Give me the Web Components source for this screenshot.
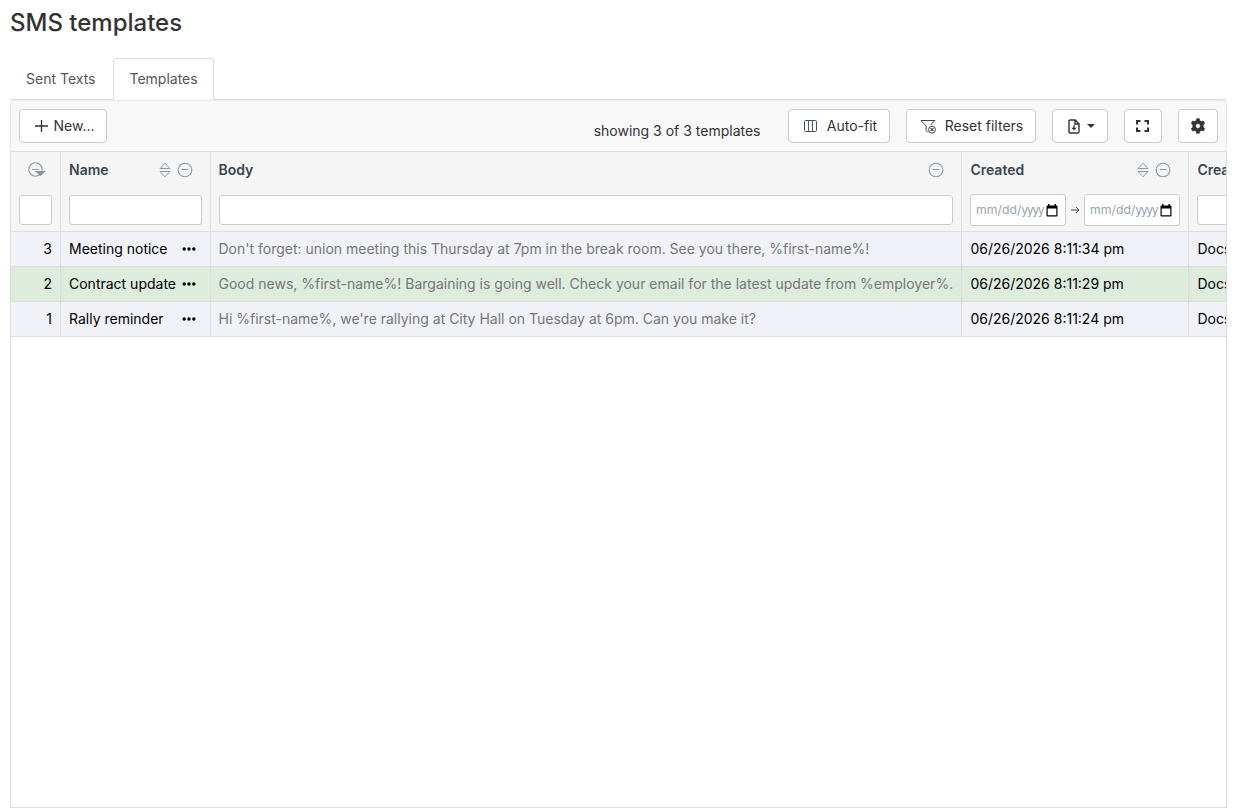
<!DOCTYPE html>
<html lang="en">
<head>
<meta charset="utf-8">
<title>SMS templates</title>
<style>
html,body{margin:0;height:100%;background:#fff}
body{font-family:Inter,"Liberation Sans",sans-serif;font-size:14px;color:#333;overflow:hidden}
</style>
</head>
<body>
<sms-page></sms-page>
<script>
const define=(name,css,html)=>customElements.define(name,class extends HTMLElement{
  constructor(){
    super();
    const t=document.createElement('template');
    t.innerHTML=`<style>*{box-sizing:border-box}${css}</style>${typeof html==='function'?html(this):html}`;
    this.attachShadow({mode:'open'}).append(t.content.cloneNode(true));
  }
});

const icons={
  plus:[14,14,'<path d="M7.5 1v12M1 7h13" stroke="#333" stroke-width="1.3" fill="none"/>'],
  columns:[14,14,'<rect x=".5" y="1.500" width="12" height="11" rx="1.200" fill="none" stroke="#4a4f58"/><path d="M4.500 1.500v11M8.500 1.500v11" stroke="#4a5a70" fill="none"/>'],
  filter:[17,15,'<path d="M8 13.500 6.200 11.600V7L1 1.500h13.800L10.600 6" fill="none" stroke="#444" stroke-linejoin="round"/><circle cx="12" cy="10.700" r="3.500" fill="none" stroke="#444"/><path d="m10.500 9.200 3 3M13.500 9.200l-3 3" stroke="#444" stroke-width="1.200" fill="none"/>'],
  file:[12,15,'<path d="M1 2.200Q1 1 2.200 1h5L11 4.800v8Q11 14 9.800 14H2.200Q1 14 1 12.800zM7 1v4h4" fill="none" stroke="#333" stroke-width="1.400"/><path d="M6 6.300v3" stroke="#333" stroke-width="1.400"/><path d="M3.400 8.800h5.200L6 11.600z" fill="#333"/>'],
  caret:[8,4,'<path d="M0 0h8L4 4z" fill="#333"/>'],
  expand:[13,12,'<path d="M1 4.500V1h3.500M8.500 1H12v3.500M12 7.500V11H8.500M4.500 11H1V7.500" fill="none" stroke="#333" stroke-width="2"/>'],
  gear:[14,16,'<path fill-rule="evenodd" fill="#333" stroke="#333" stroke-width=".6" stroke-linejoin="round" d="M5.600.7h2.800l.5 2.100 1.400.8 2.100-.7 1.400 2.400-1.600 1.500v2.400l1.600 1.500-1.400 2.400-2.100-.7-1.400.8-.5 2.100H5.600l-.5-2.100-1.400-.8-2.100.7L.2 10.700l1.600-1.500V6.800L.2 5.300l1.400-2.400 2.100.7 1.400-.8zM7 5.600a2.400 2.400 0 1 0 0 4.800 2.400 2.400 0 0 0 0-4.800z"/>'],
  minus:[16,16,'<circle cx="8" cy="8" r="6.800" fill="none" stroke="#8d9ba6" stroke-width="1.100"/><path d="M4.700 7.500h6.600" stroke="#8d9ba6" stroke-width="1.100"/>'],
  sort:[12,16,'<path d="M6 1.200 11 6.500H1zM6 14.800 11 9.500H1z" fill="none" stroke="#8d9ba6" stroke-linejoin="round"/>'],
  sorted:[19,16,'<circle cx="7.500" cy="7.500" r="6.700" fill="none" stroke="#8d9ba6" stroke-width="1.100"/><path d="M4 7.500h7" stroke="#8d9ba6"/><path d="M7 9h11l-5.500 5z" fill="#8493a0"/>'],
  dots:[14,4,'<circle cx="2.200" cy="2" r="1.700"/><circle cx="7" cy="2" r="1.700"/><circle cx="11.800" cy="2" r="1.700"/>'],
  calendar:[12,13,'<path d="M2 0h1.500v1.500h5V0H10v1.500h.6Q11.500 1.500 11.500 2.500v9Q11.500 12.500 10.500 12.500h-9Q.5 12.500 .5 11.500v-9Q.5 1.500 1.500 1.500H2zM1.700 4.500v6.800h8.600v-6.800z" fill="#000"/>'],
  arrow:[9,8,'<path d="M0 4h8M5 1l3 3-3 3" fill="none" stroke="#444"/>']
};
define('ui-icon',':host{display:block;flex:none}svg{display:block}',el=>{
  const [w,h,p]=icons[el.getAttribute('name')];
  return `<svg width="${w}" height="${h}" viewBox="0 0 ${w} ${h}">${p}</svg>`;
});
define('ui-button',':host{display:flex;align-items:center;justify-content:center;box-sizing:border-box;height:34px;border:1px solid #ccc;border-radius:4px;background:#fff;color:#333;line-height:20px;white-space:nowrap;flex:none}','<slot></slot>');
define('ui-tab',':host{display:block;box-sizing:border-box;height:42px;padding:10px 15px 0;border:1px solid transparent;border-bottom:0;border-radius:4px 4px 0 0;line-height:20px;color:#555;white-space:nowrap}:host([active]){background:#fff;border-color:#ddd}','<slot></slot>');
define('ui-input',':host{display:flex;align-items:center;box-sizing:border-box;height:30px;border:1px solid #ccc;border-radius:3px;background:#fff}','<slot></slot>');
define('date-input',':host{display:flex;align-items:center;box-sizing:border-box;width:96px;height:32px;padding:0 7px 0 5px;border:1px solid #ccc;border-radius:3px;background:#fff;flex:none}span{width:68px;white-space:nowrap;color:#9aa5ad;font-size:12.250px;line-height:20px;margin-right:2px}i{font-style:normal;letter-spacing:-1.400px}','<span>mm/dd/<i>yyyy</i></span><ui-icon name="calendar"></ui-icon>');
define('head-cell',':host{display:flex;flex-direction:column;box-sizing:border-box;height:80px;padding:8px 8px 0;background:#f5f5f5;border-right:1px solid #ddd;border-bottom:1px solid #ddd;overflow:hidden}:host([last]){border-right:0}.t{display:flex;height:20px;align-items:center;gap:6px;font-weight:600;color:#3c4650;line-height:20px;white-space:nowrap;padding-right:var(--end,8.500px);margin-left:var(--start,0)}.t b{font-weight:600;flex:1}.f{display:flex;align-items:center;height:32px;margin-top:14px}::slotted(ui-input){flex:1}',
  el=>`<div class="t"><b>${el.getAttribute('label')||''}</b><slot name="icons"></slot></div><div class="f"><slot></slot></div>`);
define('body-cell',':host{display:flex;align-items:center;box-sizing:border-box;height:35px;padding:0 8px;border-right:1px solid #ddd;border-bottom:1px solid #ddd;line-height:20px;color:#000;white-space:nowrap;overflow:hidden;background:var(--row)}:host([num]){justify-content:flex-end}:host([muted]){color:#777;padding:0 0 0 7.500px}:host([menu]){justify-content:space-between;padding-right:14px}:host([wide]){padding-left:8.400px}:host([last]){border-right:0;padding-left:8.400px}','<slot></slot>');

const rows=[
  [3,'Meeting notice',"Don't forget: union meeting this Thursday at 7pm in the break room. See you there, %first-name%!",'06/26/2026 8:11:34 pm','#f1f2f8'],
  [2,'Contract update','Good news, %first-name%! Bargaining is going well. Check your email for the latest update from %employer%.','06/26/2026 8:11:29 pm','#deecde'],
  [1,'Rally reminder',"Hi %first-name%, we're rallying at City Hall on Tuesday at 6pm. Can you make it?",'06/26/2026 8:11:24 pm','#f1f2f8']
];
define('data-grid',`:host{display:block;flex:1;border:1px solid #ddd;overflow:hidden}
.g{display:grid;grid-template-columns:50px 150px 751px 227px minmax(0,1fr)}
.first{margin-right:-3px}.arrow{margin:0 4px 0 5px}`,
`<div class="g">
<head-cell><ui-icon class="first" slot="icons" name="sorted"></ui-icon><ui-input></ui-input></head-cell>
<head-cell label="Name" style="--end:9px"><ui-icon slot="icons" name="sort"></ui-icon><ui-icon slot="icons" name="minus"></ui-icon><ui-input></ui-input></head-cell>
<head-cell label="Body" style="--start:-.5px;--end:9px"><ui-icon slot="icons" name="minus"></ui-icon><ui-input></ui-input></head-cell>
<head-cell label="Created" style="--start:.4px;--end:9px"><ui-icon slot="icons" name="sort"></ui-icon><ui-icon slot="icons" name="minus"></ui-icon><date-input></date-input><ui-icon class="arrow" name="arrow"></ui-icon><date-input></date-input></head-cell>
<head-cell label="Created" style="--start:.4px" last><ui-input style="min-width:130px"></ui-input></head-cell>
${rows.map(([id,n,b,d,c])=>`<body-cell num style="--row:${c}">${id}</body-cell><body-cell menu style="--row:${c}"><span>${n}</span><ui-icon name="dots"></ui-icon></body-cell><body-cell muted style="--row:${c}">${b}</body-cell><body-cell wide style="--row:${c}">${d}</body-cell><body-cell last style="--row:${c}">Docs</body-cell>`).join('')}
</div>`);
define('grid-toolbar',`:host{display:flex;box-sizing:border-box;height:51px;padding:8px 8px 0;border:1px solid #e7e7e7;border-bottom:0;border-radius:4px;background:#f8f8f8;gap:16px;align-items:flex-start}
.count{margin:12px 11.500px 0 auto;line-height:20px;white-space:nowrap}`,
`<ui-button style="width:88px;gap:6px;padding-left:2px"><ui-icon name="plus"></ui-icon><span>New...</span></ui-button>
<span class="count">showing 3 of 3 templates</span>
<ui-button style="width:102px;gap:9px;padding-left:3px"><ui-icon name="columns"></ui-icon><span>Auto-fit</span></ui-button>
<ui-button style="width:130px;gap:8px;padding-left:1px"><ui-icon name="filter"></ui-icon><span>Reset filters</span></ui-button>
<ui-button style="width:56px;gap:7px;padding-left:3px"><ui-icon name="file"></ui-icon><ui-icon name="caret"></ui-icon></ui-button>
<ui-button style="width:38px;padding-right:1px"><ui-icon name="expand"></ui-icon></ui-button>
<ui-button style="width:40px"><ui-icon name="gear"></ui-icon></ui-button>`);
define('sms-page',`:host{display:flex;flex-direction:column;box-sizing:border-box;height:808px;padding:8px 14px 0 10px}
h1{margin:0;font-size:24px;font-weight:500;line-height:30px;color:#333}
nav{display:flex;margin-top:20px;height:42px;border-bottom:1px solid #ddd;gap:2px}`,
`<h1>SMS templates</h1><nav><ui-tab>Sent Texts</ui-tab><ui-tab active>Templates</ui-tab></nav><grid-toolbar></grid-toolbar><data-grid></data-grid>`);
</script>
</body>
</html>
